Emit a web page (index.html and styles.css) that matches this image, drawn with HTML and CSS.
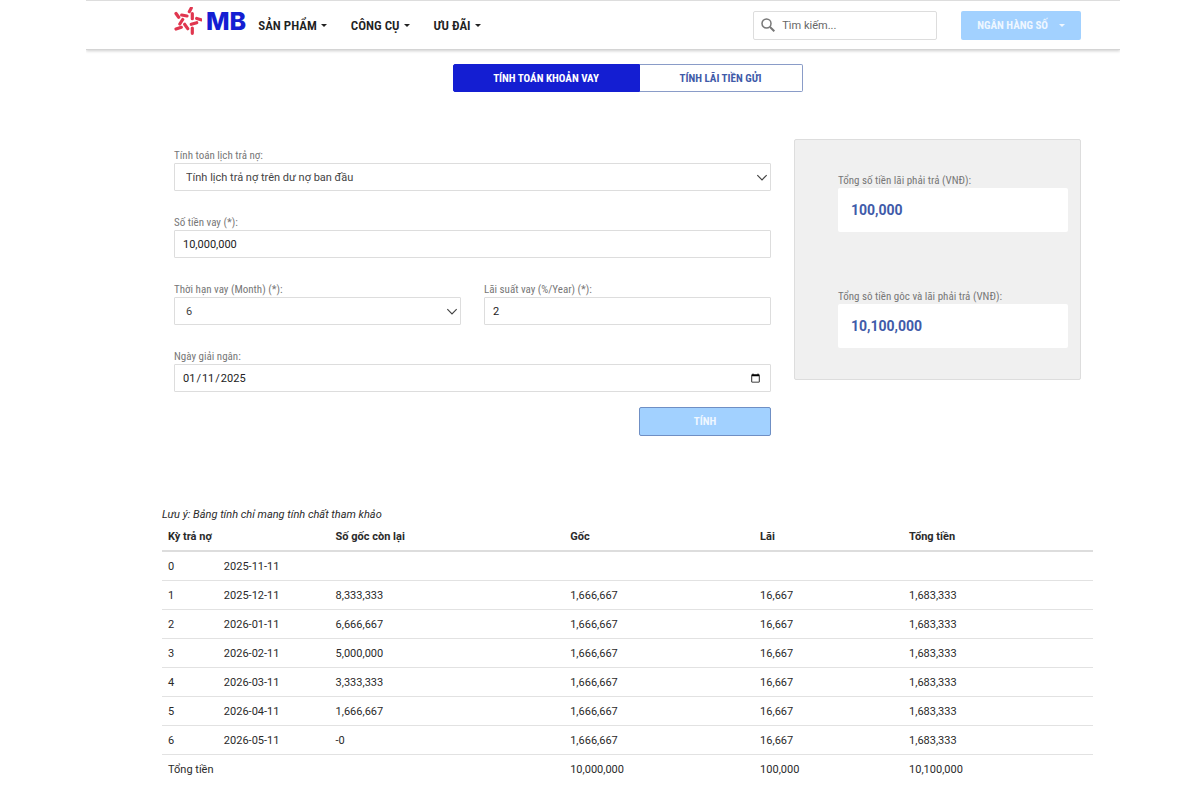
FILE: index.html
```
<!DOCTYPE html>
<html lang="vi">
<head>
    <meta charset="UTF-8">
    <meta name="viewport" content="width=device-width, initial-scale=1.0">
    <title>MB - Tính toán khoản vay</title>
    <link rel="stylesheet" href="styles.css">
</head>
<body>

<header class="header">
    <a class="logo" href="#">
        <svg class="logo-star" viewBox="0 0 28 28" aria-hidden="true">
            <g fill="none" stroke="#e0364f" stroke-width="3.200" stroke-linecap="round">
                <path d="M17.300 1L15.300 4.700M2 6.500L4.700 10.300M7.700 8L13 9M18.300 6.500V11.700M22.700 11.500L27 12.800M8.700 12.500L5.800 17M17.300 17.300L22.700 15.700M2 22L7.300 20.300M10.700 17.300L13.700 21.700M18.300 21V26.300"/>
            </g>
        </svg>
        <span class="logo-text">MB</span>
    </a>
    <nav class="nav">
        <a href="#">SẢN PHẨM <span class="caret"></span></a>
        <a href="#">CÔNG CỤ <span class="caret"></span></a>
        <a href="#">ƯU ĐÃI <span class="caret"></span></a>
    </nav>
    <form class="search">
        <svg class="search-icon" viewBox="0 0 14 14" aria-hidden="true">
            <circle cx="5.500" cy="5.500" r="4.500" fill="none" stroke="#777" stroke-width="1.500"/>
            <path d="M9 9L13.300 13.300" stroke="#777" stroke-width="2"/>
        </svg>
        <input type="text" placeholder="Tìm kiếm..." aria-label="Tìm kiếm">
    </form>
    <button class="bank-button" type="button">NGÂN HÀNG SỐ <span class="caret"></span></button>
</header>

<main class="main">
    <div class="tabs">
        <button class="tab active" type="button">TÍNH TOÁN KHOẢN VAY</button>
        <button class="tab" type="button">TÍNH LÃI TIỀN GỬI</button>
    </div>

    <div class="calculator">
        <form class="loan-form">
            <div class="field wide">
                <label for="schedule">Tính toán lịch trả nợ:</label>
                <select id="schedule">
                    <option>Tính lịch trả nợ trên dư nợ ban đầu</option>
                </select>
            </div>
            <div class="field wide">
                <label for="amount">Số tiền vay (*):</label>
                <input type="text" id="amount" value="10,000,000">
            </div>
            <div class="field">
                <label for="term">Thời hạn vay (Month) (*):</label>
                <select id="term">
                    <option>6</option>
                </select>
            </div>
            <div class="field">
                <label for="rate">Lãi suất vay (%/Year) (*):</label>
                <input type="text" id="rate" value="2">
            </div>
            <div class="field wide">
                <label for="date">Ngày giải ngân:</label>
                <input type="date" id="date" value="2025-01-11">
            </div>
            <button class="submit" type="button">TÍNH</button>
        </form>

        <aside class="summary">
            <div class="result">
                <label for="total-interest">Tổng số tiền lãi phải trả (VNĐ):</label>
                <output id="total-interest">100,000</output>
            </div>
            <div class="result">
                <label for="total-payment">Tổng sô tiền gôc và lãi phải trả (VNĐ):</label>
                <output id="total-payment">10,100,000</output>
            </div>
        </aside>
    </div>

    <section class="schedule">
        <p class="note">Lưu ý: Bảng tính chỉ mang tính chất tham khảo</p>
        <table>
            <colgroup>
                <col class="col-period">
                <col class="col-date">
                <col class="col-remaining">
                <col class="col-principal">
                <col class="col-interest">
                <col>
            </colgroup>
            <thead>
                <tr><th colspan="2">Kỳ trả nợ</th><th>Số gốc còn lại</th><th>Gốc</th><th>Lãi</th><th>Tổng tiền</th></tr>
            </thead>
            <tbody>
                <tr><td>0</td><td>2025-11-11</td><td></td><td></td><td></td><td></td></tr>
                <tr><td>1</td><td>2025-12-11</td><td>8,333,333</td><td>1,666,667</td><td>16,667</td><td>1,683,333</td></tr>
                <tr><td>2</td><td>2026-01-11</td><td>6,666,667</td><td>1,666,667</td><td>16,667</td><td>1,683,333</td></tr>
                <tr><td>3</td><td>2026-02-11</td><td>5,000,000</td><td>1,666,667</td><td>16,667</td><td>1,683,333</td></tr>
                <tr><td>4</td><td>2026-03-11</td><td>3,333,333</td><td>1,666,667</td><td>16,667</td><td>1,683,333</td></tr>
                <tr><td>5</td><td>2026-04-11</td><td>1,666,667</td><td>1,666,667</td><td>16,667</td><td>1,683,333</td></tr>
                <tr><td>6</td><td>2026-05-11</td><td>-0</td><td>1,666,667</td><td>16,667</td><td>1,683,333</td></tr>
            </tbody>
            <tfoot>
                <tr><td colspan="2">Tổng tiền</td><td></td><td>10,000,000</td><td>100,000</td><td>10,100,000</td></tr>
            </tfoot>
        </table>
    </section>
</main>

</body>
</html>
```
FILE: styles.css
```
* {
    box-sizing: border-box;
}
body {
    margin: 0;
    padding: 0 80px 0 86px;
    font-family: Roboto, sans-serif;
    font-size: 11px;
    color: #2a2a2a;
    background-color: #fff;
}
button,
input,
select {
    font-family: inherit;
    font-size: 11px;
}
.header {
    display: flex;
    align-items: center;
    height: 50px;
    padding: 0 39px 0 88px;
    border-top: 1px solid #ddd;
    border-bottom: 1px solid #d4d4d4;
    box-shadow: 0 1px 3px rgba(0, 0, 0, 0.2);
    clip-path: inset(0 0 -6px 0);
}
.logo {
    display: flex;
    align-items: center;
    gap: 4px;
    margin-bottom: 8px;
    text-decoration: none;
}
.logo-star {
    width: 28px;
    height: 28px;
}
.logo-text {
    font-family: Inter, sans-serif;
    font-size: 25px;
    font-weight: 800;
    line-height: 28px;
    color: #141ed2;
}
.nav {
    display: flex;
    gap: 24px;
    margin-left: 12px;
    font-family: "Roboto Condensed", Roboto, sans-serif;
    font-size: 13px;
    font-weight: 600;
}
.nav a {
    display: flex;
    align-items: center;
    gap: 4px;
    color: #222;
    text-decoration: none;
    white-space: nowrap;
}
.caret {
    border-top: 3px solid currentColor;
    border-left: 3px solid transparent;
    border-right: 3px solid transparent;
}
.search {
    display: flex;
    align-items: center;
    gap: 7px;
    width: 184px;
    height: 29px;
    margin-left: auto;
    padding: 0 7px;
    border: 1px solid #ddd;
    border-radius: 2px;
}
.search-icon {
    flex: none;
    width: 14px;
    height: 14px;
}
.search input {
    width: 100%;
    padding: 0;
    border: none;
    outline: none;
}
.search input::placeholder {
    color: #666;
}
.bank-button {
    display: flex;
    align-items: center;
    gap: 11px;
    height: 29px;
    margin-left: 24px;
    padding: 0 16px;
    border: none;
    border-radius: 2px;
    font-family: "Roboto Condensed", Roboto, sans-serif;
    font-weight: 700;
    color: #eff7ff;
    background-color: #a2d1ff;
}
.main {
    padding: 14px 27px 0 76px;
}
.tabs {
    display: flex;
    justify-content: center;
}
.tab {
    width: 163px;
    height: 28px;
    border: 1px solid #8a9cc8;
    border-left: none;
    border-radius: 0 2px 2px 0;
    font-family: "Roboto Condensed", Roboto, sans-serif;
    font-weight: 700;
    color: #3f5ba9;
    background-color: #fff;
}
.tab.active {
    width: 187px;
    border: 1px solid #141ed2;
    border-radius: 2px 0 0 2px;
    color: #fff;
    background-color: #141ed2;
}
.calculator {
    display: grid;
    grid-template-columns: 1fr 287px;
    gap: 23px;
    align-items: start;
    padding: 47px 12px 0;
}
.loan-form {
    display: grid;
    grid-template-columns: 1fr 1fr;
    gap: 23px;
    padding-top: 8px;
}
.wide {
    grid-column: 1 / 3;
}
.field label,
.result label {
    display: block;
    padding-top: 2px;
    font-family: "Roboto Condensed", Roboto, sans-serif;
    line-height: 14px;
    color: #777;
}
.field input,
.field select {
    display: block;
    width: 100%;
    height: 28px;
    padding: 0 8px;
    border: 1px solid #ddd;
    border-radius: 1px;
    color: #222;
    background-color: #fff;
}
.field input[type="date"] {
    padding: 0 7px;
}
.field select {
    padding: 0 11px;
    color: #444;
    appearance: none;
    background-image: url("data:image/svg+xml,%3Csvg xmlns='http://www.w3.org/2000/svg' viewBox='0 0 10 6'%3E%3Cpath d='M1 1l4 4 4-4' fill='none' stroke='%23444'/%3E%3C/svg%3E");
    background-repeat: no-repeat;
    background-position: right 2px center;
    background-size: 12px 7px;
}
.submit {
    grid-column: 2;
    justify-self: end;
    width: 132px;
    height: 29px;
    margin-top: -8px;
    border: 1px solid #6f8fc4;
    border-radius: 2px;
    font-family: "Roboto Condensed", Roboto, sans-serif;
    font-weight: 700;
    color: #eff7ff;
    background-color: #a2d1ff;
}
.summary {
    display: flex;
    flex-direction: column;
    gap: 56px;
    padding: 32px 12px 31px 43px;
    border: 1px solid #ddd;
    border-radius: 2px;
    background-color: #f0f0f0;
}
.result output {
    display: block;
    padding: 0 13px;
    border-radius: 2px;
    font-size: 14px;
    font-weight: 700;
    line-height: 44px;
    color: #3f5ba9;
    background-color: #fff;
}
.schedule {
    padding-top: 71px;
}
.note {
    margin: 0;
    font-style: italic;
    line-height: 15px;
}
table {
    width: 100%;
    border-collapse: collapse;
    table-layout: fixed;
}
.col-period {
    width: 6%;
}
.col-date {
    width: 12%;
}
.col-remaining {
    width: 25.2%;
}
.col-principal {
    width: 20.4%;
}
.col-interest {
    width: 16%;
}
th,
td {
    height: 29px;
    padding: 2px 6px 0;
    text-align: left;
    border-bottom: 1px solid #e2e2e2;
}
th {
    padding-top: 0;
    border-bottom: 2px solid #ddd;
}
tfoot td {
    border-bottom: none;
}
```
